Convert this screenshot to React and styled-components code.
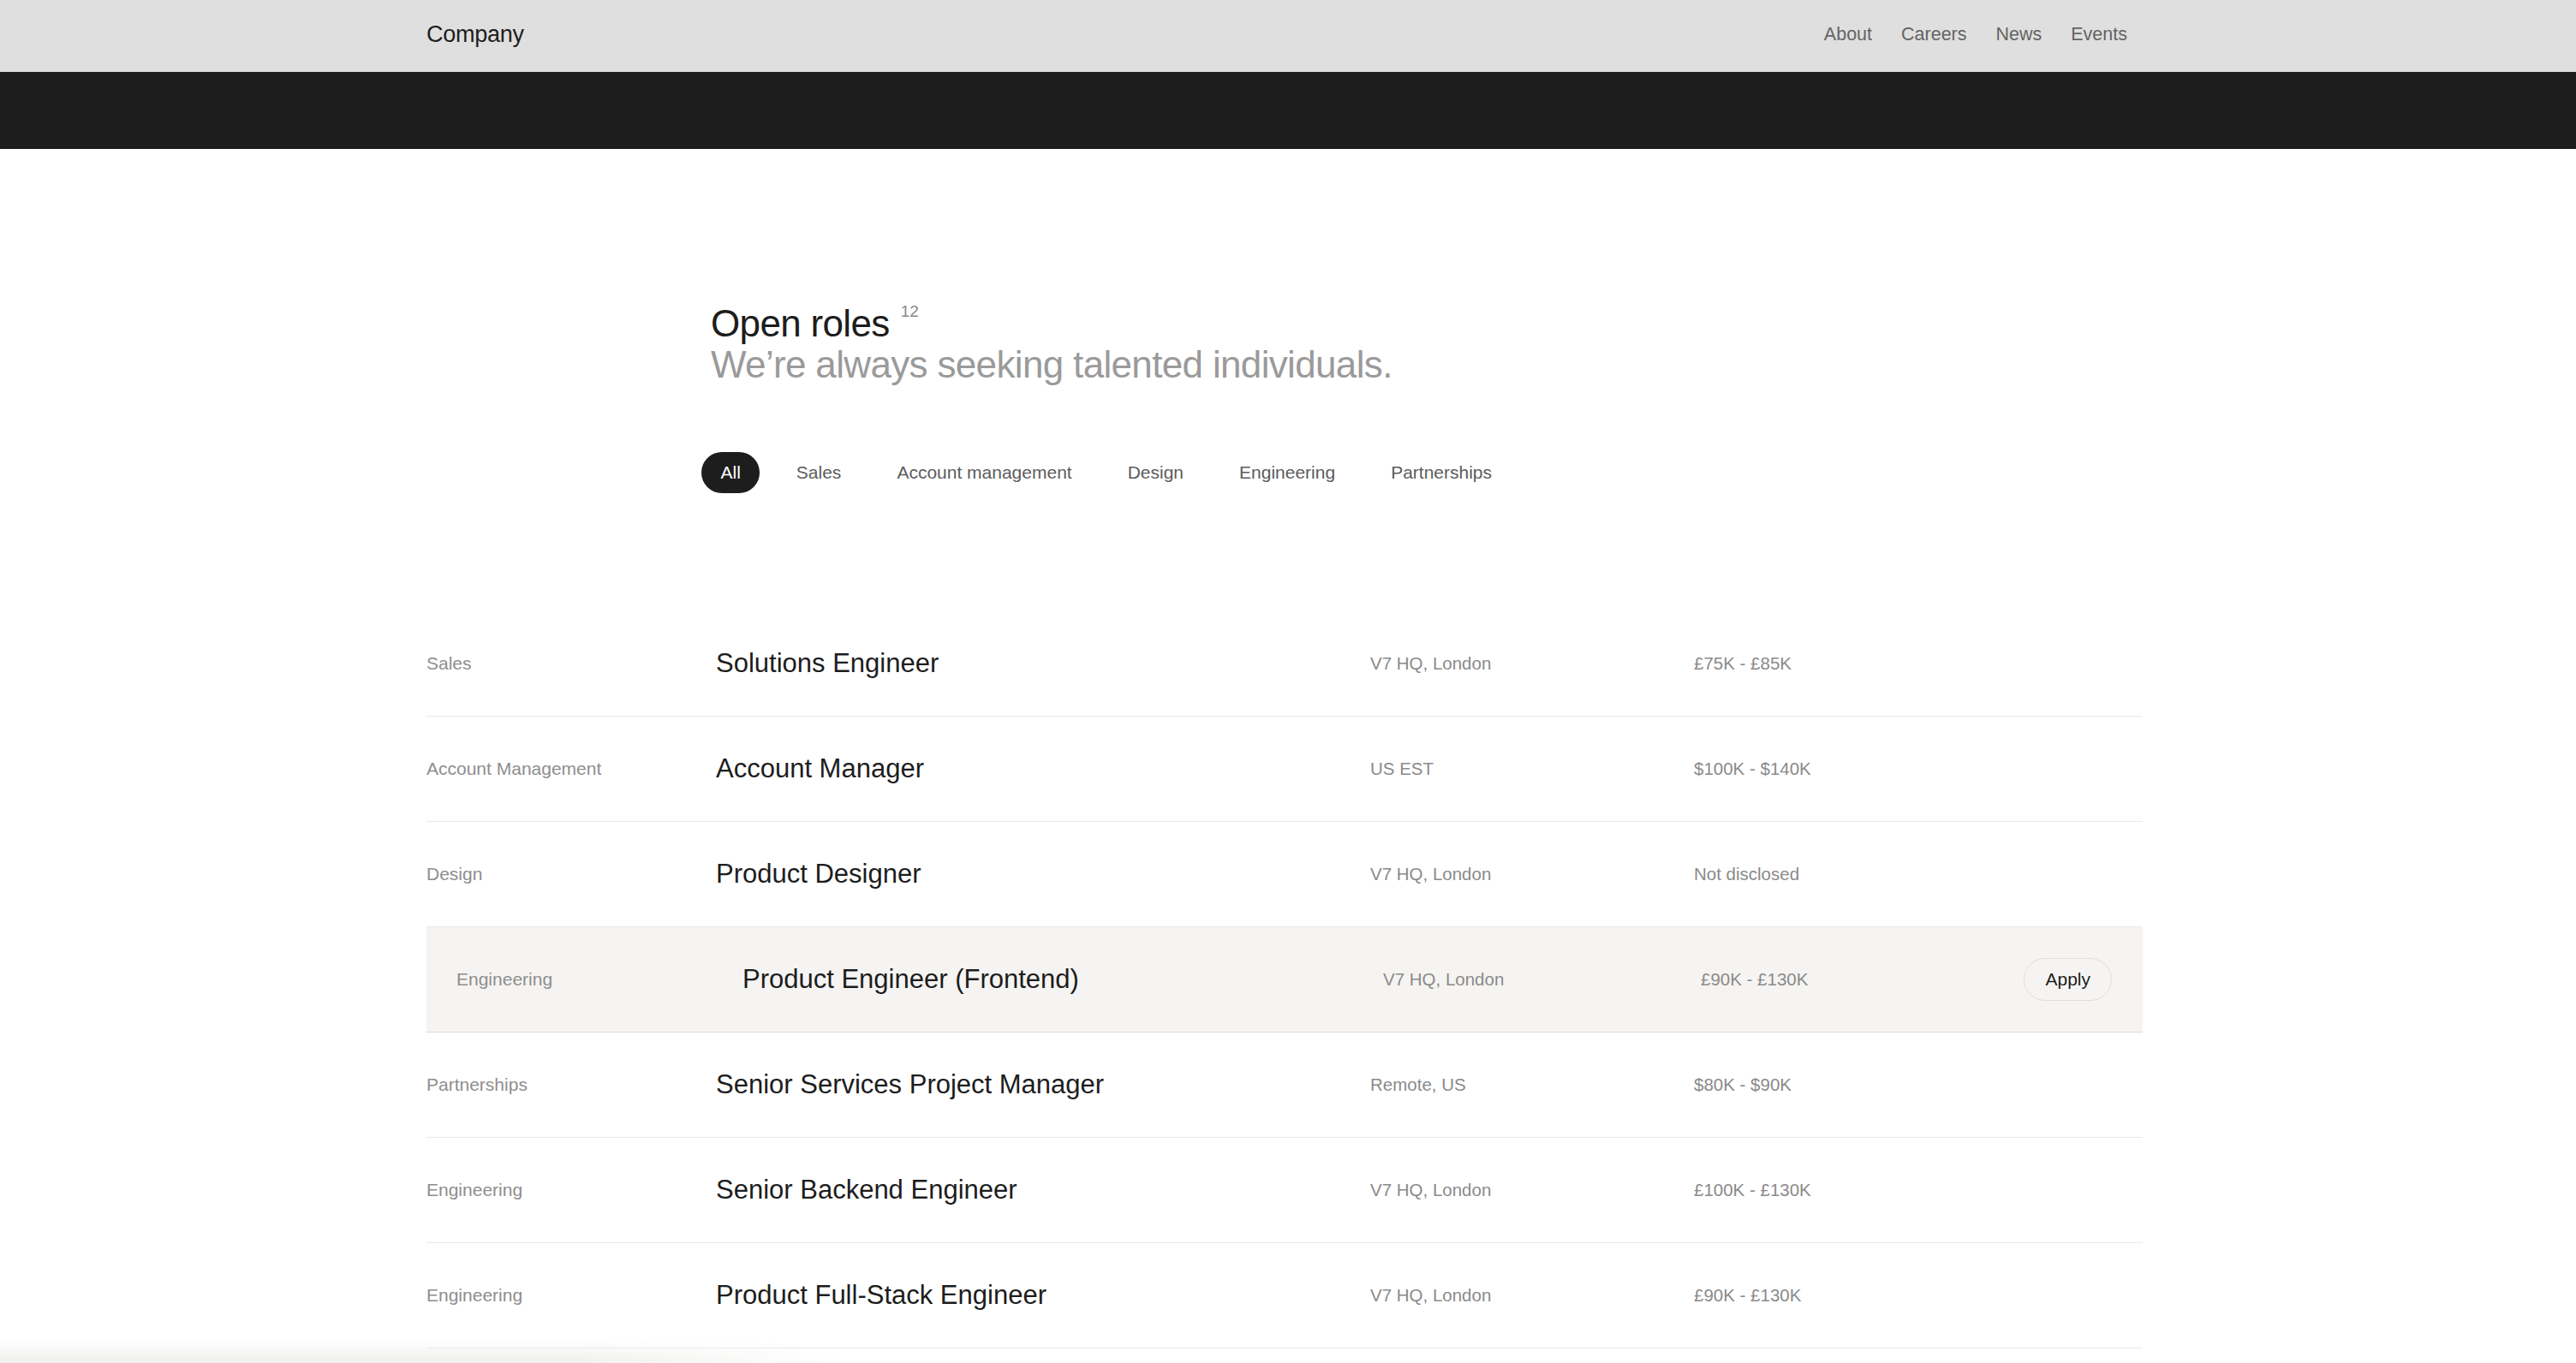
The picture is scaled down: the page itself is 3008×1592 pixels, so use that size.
import React from "react";
import styled, { createGlobalStyle } from "styled-components";

const GlobalStyle = createGlobalStyle`
  * {
    box-sizing: border-box;
  }
  body {
    margin: 0;
    background: #fff;
    color: #1d1d1d;
    font-family: "Liberation Sans", Arial, sans-serif;
  }
`;

// the layout column sits a few px left of true centre in the reference
const Shell = styled.div`
  width: 2004px;
  margin-left: calc(50% - 1006px);
`;

const TopBar = styled.header`
  height: 84px;
  background: #dfdfdf;
`;

const TopBarInner = styled(Shell)`
  height: 100%;
  padding: 0 18px 3px 0;
  display: flex;
  align-items: center;
  justify-content: space-between;
`;

const Brand = styled.a`
  font-size: 27px;
  color: #1d1d1d;
  text-decoration: none;
  letter-spacing: -0.01em;
`;

const Nav = styled.nav`
  display: flex;
  gap: 34px;
`;

const NavLink = styled.a`
  font-size: 21.5px;
  color: #646464;
  text-decoration: none;
`;

const Band = styled.div`
  height: 90px;
  background: #1d1d1d;
`;

const Container = styled(Shell).attrs({ as: "main" })`
  padding-top: 180px;
`;

const Intro = styled.section`
  padding-left: 332px;
`;

const Title = styled.h1`
  margin: 0;
  font-size: 44px;
  line-height: 48px;
  font-weight: 400;
  letter-spacing: -0.015em;
  color: #1d1d1d;
`;

const Count = styled.sup`
  display: inline-block;
  vertical-align: top;
  margin-left: 13px;
  font-size: 19px;
  line-height: 19px;
  letter-spacing: 0;
  color: #8a8a8a;
`;

const Subtitle = styled.p`
  margin: 0;
  font-size: 44px;
  line-height: 48px;
  letter-spacing: -0.015em;
  color: #9a9a9a;
`;

const Filters = styled.div`
  display: flex;
  gap: 20px;
  margin: 78px 0 0 321px;
`;

const Pill = styled.button`
  height: 48px;
  padding: 0 22.5px;
  border: 0;
  border-radius: 24px;
  font-family: inherit;
  font-size: 21px;
  background: ${(p) => (p.$active ? "#1d1d1d" : "transparent")};
  color: ${(p) => (p.$active ? "#fff" : "#5c5c5c")};
  cursor: pointer;
`;

const RoleList = styled.ul`
  list-style: none;
  margin: 138px 0 0;
  padding: 0;
`;

const RoleRow = styled.li`
  height: 123px;
  display: grid;
  grid-template-columns: ${(p) =>
    p.$active ? "334px 748px 371px 1fr auto" : "338px 764px 378px 1fr"};
  align-items: center;
  padding: ${(p) => (p.$active ? "0 36px 0 35px" : "0")};
  background: ${(p) => (p.$active ? "#f5f4f2" : "transparent")};
  border-bottom: 1px solid ${(p) => (p.$active ? "#dadada" : "#e9e9e9")};
`;

const Category = styled.span`
  font-size: 21px;
  color: #8e8e8e;
`;

const RoleTitle = styled.span`
  font-size: 31px;
  color: #1d1d1d;
`;

const Meta = styled.span`
  font-size: 20.5px;
  color: #8a8a8a;
`;

const ApplyButton = styled.button`
  height: 50px;
  padding: 0 24px;
  border: 1px solid #dedede;
  border-radius: 25px;
  background: transparent;
  font-family: inherit;
  font-size: 21px;
  color: #1d1d1d;
  cursor: pointer;
`;

const BottomFade = styled.div`
  position: fixed;
  left: 0;
  bottom: 0;
  width: 980px;
  height: 26px;
  background: linear-gradient(to right, #f3f2f0 70%, rgba(243, 242, 240, 0));
  -webkit-mask-image: linear-gradient(to top, #000 20%, transparent);
  mask-image: linear-gradient(to top, #000 20%, transparent);
  pointer-events: none;
`;

const filters = ["All", "Sales", "Account management", "Design", "Engineering", "Partnerships"];

const roles = [
  { cat: "Sales", title: "Solutions Engineer", loc: "V7 HQ, London", pay: "£75K - £85K" },
  { cat: "Account Management", title: "Account Manager", loc: "US EST", pay: "$100K - $140K" },
  { cat: "Design", title: "Product Designer", loc: "V7 HQ, London", pay: "Not disclosed" },
  { cat: "Engineering", title: "Product Engineer (Frontend)", loc: "V7 HQ, London", pay: "£90K - £130K", active: true },
  { cat: "Partnerships", title: "Senior Services Project Manager", loc: "Remote, US", pay: "$80K - $90K" },
  { cat: "Engineering", title: "Senior Backend Engineer", loc: "V7 HQ, London", pay: "£100K - £130K" },
  { cat: "Engineering", title: "Product Full-Stack Engineer", loc: "V7 HQ, London", pay: "£90K - £130K" },
];

export default function App() {
  return (
    <>
      <GlobalStyle />
      <TopBar>
        <TopBarInner>
          <Brand href="#">Company</Brand>
          <Nav>
            <NavLink href="#">About</NavLink>
            <NavLink href="#">Careers</NavLink>
            <NavLink href="#">News</NavLink>
            <NavLink href="#">Events</NavLink>
          </Nav>
        </TopBarInner>
      </TopBar>
      <Band />
      <Container>
        <Intro>
          <Title>
            Open roles<Count>12</Count>
          </Title>
          <Subtitle>We’re always seeking talented individuals.</Subtitle>
        </Intro>
        <Filters>
          {filters.map((f, i) => (
            <Pill key={f} $active={i === 0}>
              {f}
            </Pill>
          ))}
        </Filters>
        <RoleList>
          {roles.map((r, i) => (
            <RoleRow key={i} $active={r.active}>
              <Category>{r.cat}</Category>
              <RoleTitle>{r.title}</RoleTitle>
              <Meta>{r.loc}</Meta>
              <Meta>{r.pay}</Meta>
              {r.active && <ApplyButton>Apply</ApplyButton>}
            </RoleRow>
          ))}
        </RoleList>
      </Container>
      <BottomFade />
    </>
  );
}
